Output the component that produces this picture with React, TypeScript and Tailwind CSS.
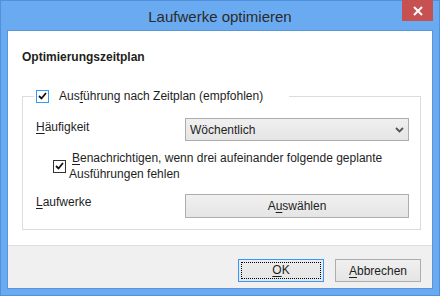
import { useState } from "react";

const font = "font-['Liberation_Sans',Arial,sans-serif]";

function Check({ checked, focused, onClick }: { checked: boolean; focused?: boolean; onClick: () => void }) {
  return (
    <button
      onClick={onClick}
      className={`w-[13px] h-[13px] shrink-0 bg-white border flex items-center justify-center ${
        focused ? "border-[#3399ff]" : "border-[#333333]"
      }`}
    >
      {checked && (
        <svg width="9" height="8" viewBox="0 0 9 8">
          <path d="M1 4 L3.5 6.5 L8 1" fill="none" stroke="#111" strokeWidth="1.8" />
        </svg>
      )}
    </button>
  );
}

function Key({ children }: { children: string }) {
  return <span className="underline underline-offset-2">{children}</span>;
}

export default function App() {
  const [scheduled, setScheduled] = useState(true);
  const [notify, setNotify] = useState(true);

  return (
    <div className={`w-[440px] h-[296px] bg-[#6aaaf0] border border-[#5190dc] flex flex-col text-[12px] leading-[16px] text-[#1e1e1e] ${font}`}>
      {/* title bar */}
      <div className="relative h-[29px] shrink-0 flex items-center justify-center">
        <span className="text-[15px] text-[#2b2b2b] mt-[2px]">Laufwerke optimieren</span>
        <button className="absolute -top-px right-[6px] w-[31px] h-[21px] bg-[#c75050] flex items-center justify-center">
          <svg width="10" height="10" viewBox="0 0 10 10">
            <path d="M1 1 L9 9 M9 1 L1 9" stroke="#fff" strokeWidth="2" />
          </svg>
        </button>
      </div>

      {/* client */}
      <div className="mx-[6px] mb-[6px] flex-1 flex flex-col border border-[#5a95d8] bg-white">
        <div className="flex-1 flex flex-col pt-[18px] pl-[14px] pr-[11px]">
          <h2 className="font-bold">Optimierungszeitplan</h2>

          <fieldset className="mt-[23px] border border-[#dcdcdc] pl-[13px] pr-[10px] pb-[11px] w-[399px]">
            <legend className="px-[2px] -ml-[2px] flex items-center">
              <Check checked={scheduled} focused onClick={() => setScheduled(!scheduled)} />
              <span className="ml-[10px] pr-[24px]">
                Aus<Key>f</Key>ührung nach Zeitplan (empfohlen)
              </span>
            </legend>

            <div className="mt-[14px] flex items-start">
              <span className="w-[149px] pt-[1px]">
                <Key>H</Key>äufigkeit
              </span>
              <div className="w-[224px] h-[23px] border border-[#acacac] bg-gradient-to-b from-[#f0f0f0] to-[#e5e5e5] flex items-center justify-between pl-[4px] pr-[4px]">
                <span>Wöchentlich</span>
                <svg width="9" height="6" viewBox="0 0 9 6">
                  <path d="M1 1 L4.5 4.5 L8 1" fill="none" stroke="#555" strokeWidth="1.8" />
                </svg>
              </div>
            </div>

            <div className="mt-[9px] pl-[17px] flex items-center">
              <Check checked={notify} onClick={() => setNotify(!notify)} />
              <p className="ml-[3px] indent-[3px]">
                <Key>B</Key>enachrichtigen, wenn drei aufeinander folgende geplante
                <br />
                Ausführungen fehlen
              </p>
            </div>

            <div className="mt-[12px] flex items-start">
              <span className="w-[149px]">
                <Key>L</Key>aufwerke
              </span>
              <button className="w-[224px] h-[24px] border border-[#adadad] bg-gradient-to-b from-[#f0f0f0] to-[#e5e5e5] text-center">
                A<Key>u</Key>swählen
              </button>
            </div>
          </fieldset>
        </div>

        <div className="h-[43px] shrink-0 border-t border-[#dfdfdf] bg-[#f0f0f0] flex justify-end gap-[11px] pt-[13px] pr-[11px]">
          <button className="w-[86px] h-[23px] border border-[#3399ff] bg-gradient-to-b from-[#ececec] to-[#e5e5e5] p-[2px]">
            <span className="block h-full border border-dotted border-black leading-[15px]">
              <Key>O</Key>K
            </span>
          </button>
          <button className="w-[86px] h-[23px] border border-[#adadad] bg-gradient-to-b from-[#f0f0f0] to-[#e5e5e5]">
            <Key>A</Key>bbrechen
          </button>
        </div>
      </div>
    </div>
  );
}
